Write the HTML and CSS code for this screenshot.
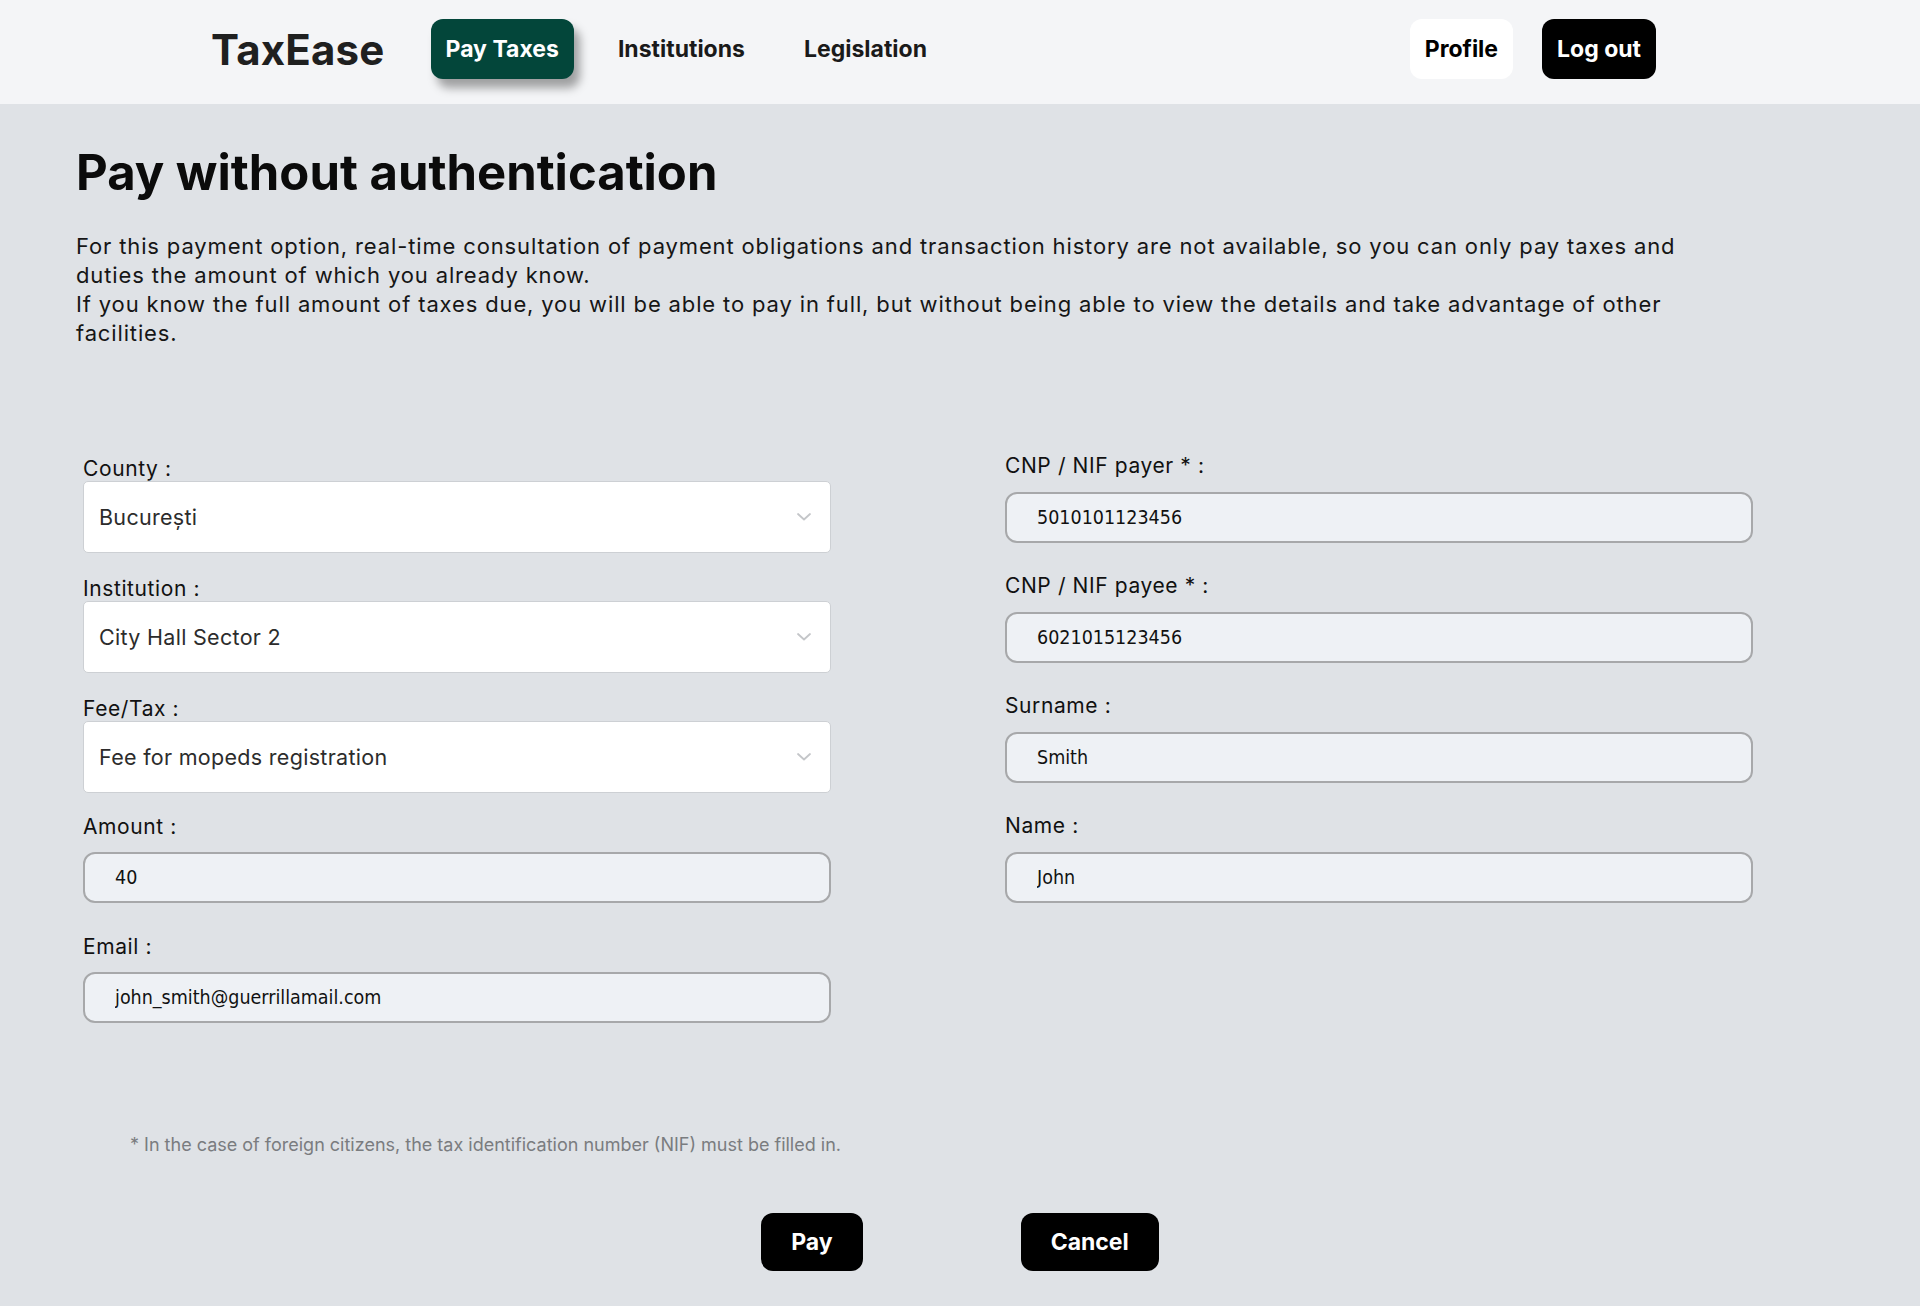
FILE: index.html
```html
<!DOCTYPE html>
<html lang="en">
<head>
<meta charset="utf-8">
<title>TaxEase – Pay without authentication</title>
<link rel="stylesheet" href="styles.css">
</head>
<body>
<header class="topbar">
  <div class="brand">TaxEase</div>
  <nav class="nav">
    <a class="nav-link active" href="#">Pay Taxes</a>
    <a class="nav-link" href="#">Institutions</a>
    <a class="nav-link" href="#">Legislation</a>
  </nav>
  <div class="account">
    <a class="acc-btn light" href="#">Profile</a>
    <a class="acc-btn dark" href="#">Log out</a>
  </div>
</header>

<main class="page">
  <h1 class="title">Pay without authentication</h1>
  <div class="intro">
    <p>For this payment option, real-time consultation of payment obligations and transaction history are not available, so you can only pay taxes and duties the amount of which you already know.</p>
    <p>If you know the full amount of taxes due, you will be able to pay in full, but without being able to view the details and take advantage of other facilities.</p>
  </div>

  <form class="pay-form">
    <div class="col col-left">
      <div class="field field-select">
        <label class="lbl">County :</label>
        <div class="select">
          <span class="select-val">București</span>
          <svg class="chev" width="16" height="10" viewBox="0 0 16 10"><path d="M2 2 L8 7.5 L14 2" fill="none" stroke="#c4c6c9" stroke-width="1.8" stroke-linecap="round" stroke-linejoin="round"/></svg>
        </div>
      </div>
      <div class="field field-select">
        <label class="lbl">Institution :</label>
        <div class="select">
          <span class="select-val">City Hall Sector 2</span>
          <svg class="chev" width="16" height="10" viewBox="0 0 16 10"><path d="M2 2 L8 7.5 L14 2" fill="none" stroke="#c4c6c9" stroke-width="1.8" stroke-linecap="round" stroke-linejoin="round"/></svg>
        </div>
      </div>
      <div class="field field-select">
        <label class="lbl">Fee/Tax :</label>
        <div class="select">
          <span class="select-val">Fee for mopeds registration</span>
          <svg class="chev" width="16" height="10" viewBox="0 0 16 10"><path d="M2 2 L8 7.5 L14 2" fill="none" stroke="#c4c6c9" stroke-width="1.8" stroke-linecap="round" stroke-linejoin="round"/></svg>
        </div>
      </div>
      <div class="field field-input">
        <label class="lbl">Amount :</label>
        <input class="inp" type="text" value="40">
      </div>
      <div class="field field-input">
        <label class="lbl">Email :</label>
        <input class="inp" type="text" value="john_smith@guerrillamail.com">
      </div>
    </div>

    <div class="col col-right">
      <div class="field field-input">
        <label class="lbl">CNP / NIF payer * :</label>
        <input class="inp" type="text" value="5010101123456">
      </div>
      <div class="field field-input">
        <label class="lbl">CNP / NIF payee * :</label>
        <input class="inp" type="text" value="6021015123456">
      </div>
      <div class="field field-input">
        <label class="lbl">Surname :</label>
        <input class="inp" type="text" value="Smith">
      </div>
      <div class="field field-input">
        <label class="lbl">Name :</label>
        <input class="inp" type="text" value="John">
      </div>
    </div>
  </form>

  <p class="note">* In the case of foreign citizens, the tax identification number (NIF) must be filled in.</p>

  <div class="actions">
    <button class="act-btn" type="button">Pay</button>
    <button class="act-btn" type="button">Cancel</button>
  </div>
</main>
</body>
</html>
```

FILE: styles.css
```css
* { box-sizing: border-box; }

html, body {
  margin: 0;
  padding: 0;
  background: #dfe2e6;
  font-family: "Inter", "Roboto", "Liberation Sans", sans-serif;
  color: #111;
}

.topbar {
  height: 104px;
  background: #f4f5f7;
  display: flex;
  align-items: center;
  padding: 0 264px 6px 211px;
}

.brand {
  font-size: 42px;
  font-weight: 700;
  color: #1f2020;
  letter-spacing: 0.2px;
  margin-right: 46px;
}

.nav {
  display: flex;
  gap: 29px;
}

.nav-link,
.acc-btn {
  display: flex;
  align-items: center;
  height: 60px;
  padding: 0 15px;
  border-radius: 12px;
  font-size: 23px;
  font-weight: 700;
  text-decoration: none;
  color: #1a1a1a;
}

.nav-link.active {
  background: #03463a;
  color: #fff;
  box-shadow: 6px 9px 10px rgba(0, 0, 0, 0.35);
}

.account {
  margin-left: auto;
  display: flex;
  gap: 29px;
}

.acc-btn.light { background: #fff; color: #000; }
.acc-btn.dark { background: #000; color: #fff; }

.page {
  padding: 0 76px 36px;
}

.title {
  margin: 40px 0 0;
  font-size: 49px;
  line-height: 58px;
  font-weight: 700;
  color: #0b0b0b;
}

.intro {
  margin-top: 30px;
  max-width: 1640px;
  font-size: 22px;
  line-height: 29px;
  letter-spacing: 0.86px;
  color: #161616;
}

.intro p { margin: 0; }

.pay-form {
  margin-top: 106px;
  padding-left: 7px;
  display: grid;
  grid-template-columns: 748px 748px;
  column-gap: 174px;
  align-items: start;
}

.col {
  display: flex;
  flex-direction: column;
}

.col-left { padding-top: 3px; }

.lbl {
  display: block;
  font-size: 21px;
  line-height: 24px;
  color: #111;
  letter-spacing: 0.6px;
}

.field-select + .field-select { margin-top: 24px; }
.field-select + .field-input { margin-top: 22px; }
.field-input + .field-input { margin-top: 32px; }
.col-right .field-input + .field-input { margin-top: 31px; }

.select {
  position: relative;
  height: 72px;
  background: #fff;
  border: 1px solid #cdd0d4;
  border-radius: 5px;
  display: flex;
  align-items: center;
  padding-left: 15px;
}

.select-val {
  font-size: 21.5px;
  color: #2c2c2c;
  letter-spacing: 0.3px;
}

.chev {
  position: absolute;
  right: 18px;
  top: 50%;
  margin-top: -5px;
}

.field-input .lbl { margin-bottom: 13px; }
.col-right .field-input .lbl { margin-bottom: 14px; }

.inp {
  display: block;
  width: 100%;
  height: 51px;
  margin: 0;
  border: 2px solid #a7a8aa;
  border-radius: 12px;
  background: #eef1f5;
  padding: 0 0 0 30px;
  font-family: "DejaVu Sans Condensed", "DejaVu Sans", "Liberation Sans", sans-serif;
  font-size: 19.5px;
  color: #111;
  outline: none;
}

.note {
  margin: 110px 0 0;
  padding-left: 54px;
  font-size: 18px;
  line-height: 24px;
  color: #7a7c7f;
}

.actions {
  margin-top: 56px;
  display: flex;
  justify-content: center;
  gap: 158px;
}

.act-btn {
  height: 58px;
  padding: 0 30px;
  border: none;
  border-radius: 12px;
  background: #000;
  color: #fff;
  font-family: "Inter", "Roboto", sans-serif;
  font-size: 23px;
  font-weight: 700;
  cursor: pointer;
}
```
